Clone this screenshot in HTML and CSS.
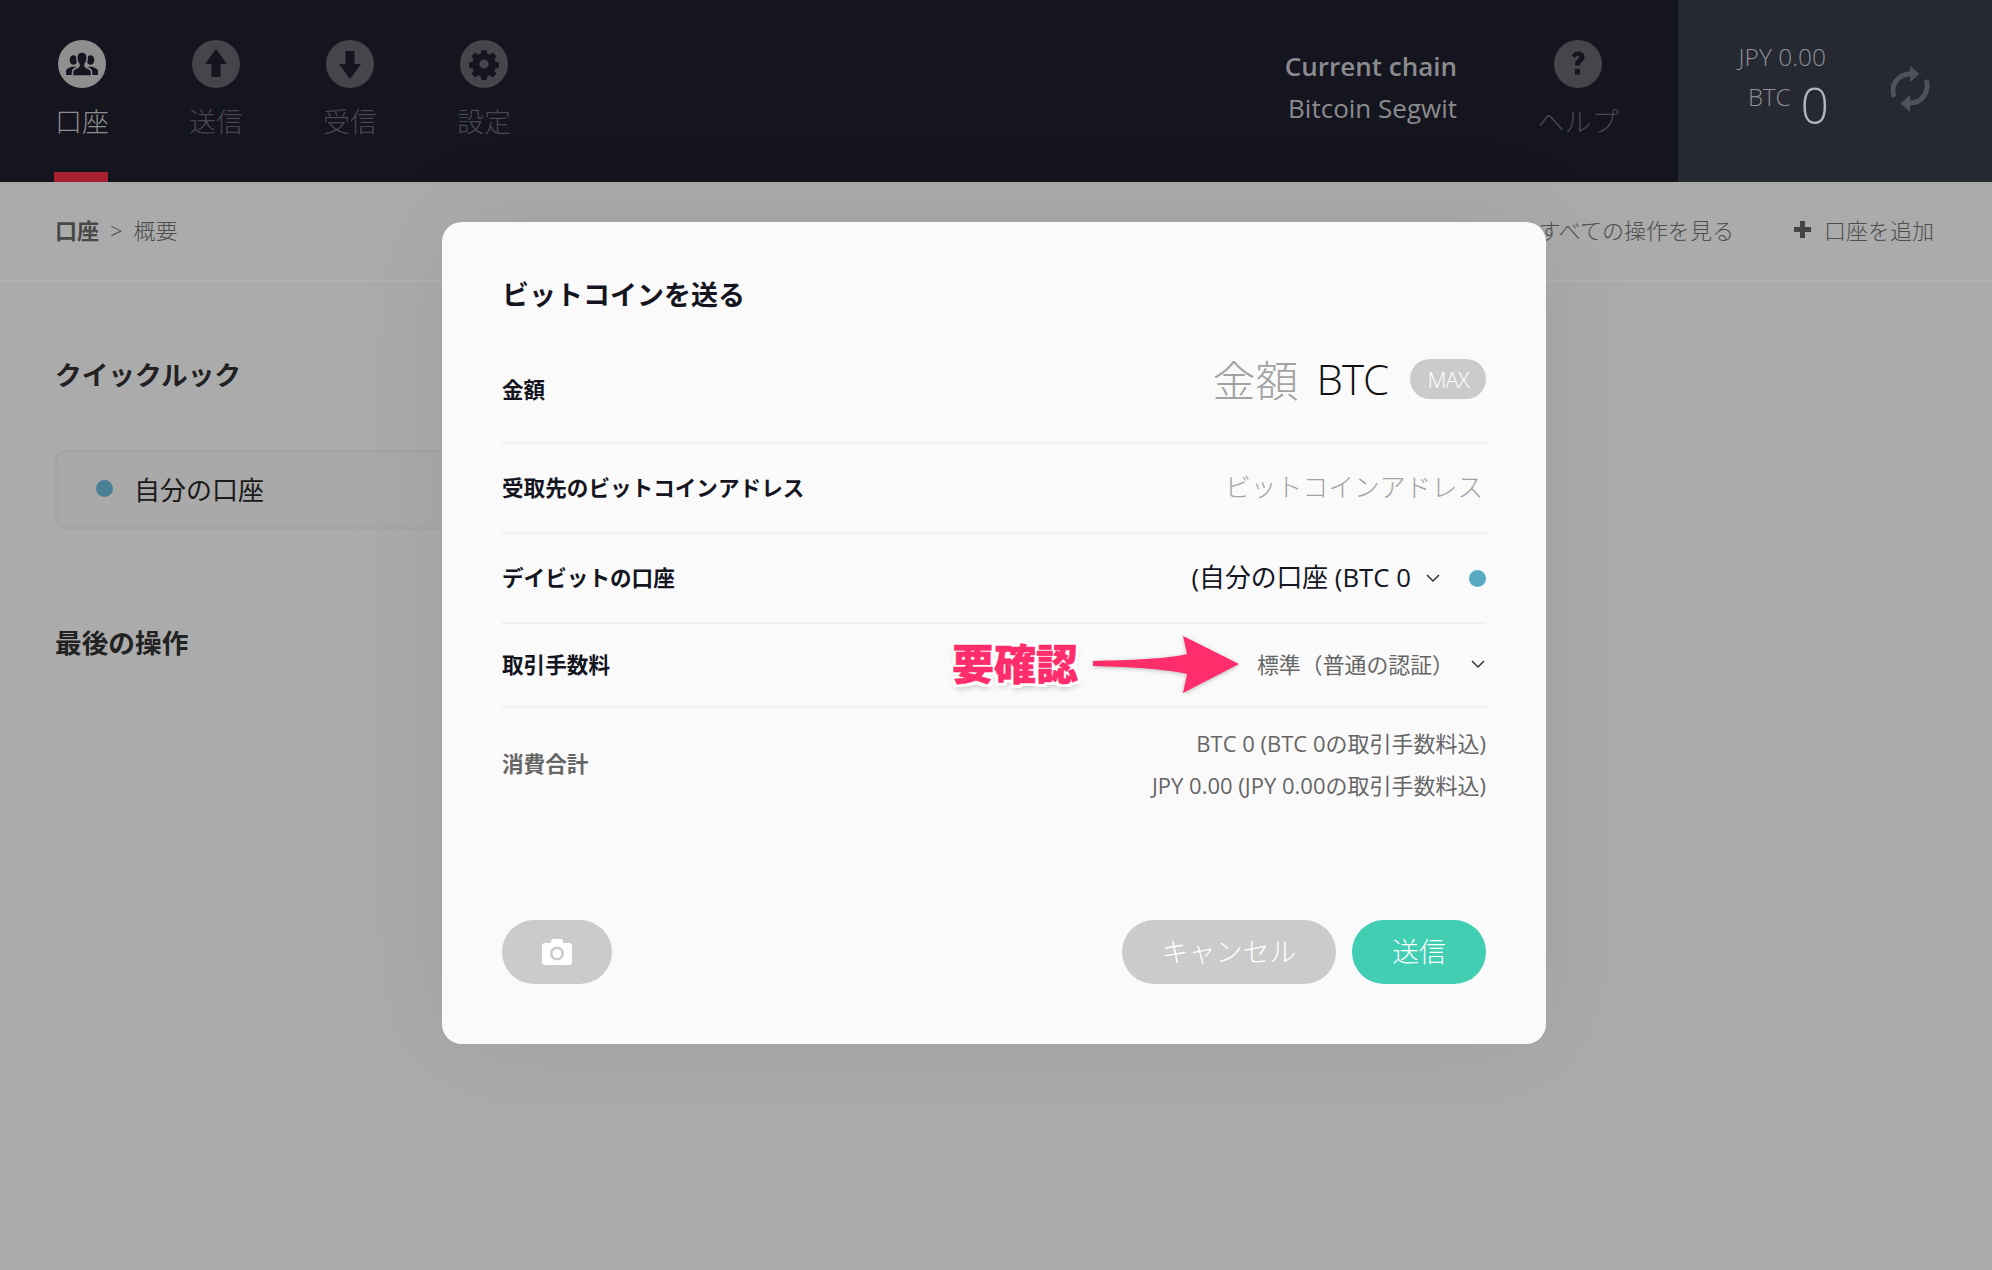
FILE: index.html
```html
<!DOCTYPE html>
<html lang="ja">

<head>
    <meta charset="utf-8">
    <meta name="viewport" content="width=device-width, initial-scale=1.0">
    <title>ビットコインを送る</title>

    <link rel="stylesheet" href="styles.css">
</head>

<body>

    <header class="top">
        <nav class="nav">
            <a class="nav-item aktiv">
                <span class="ikon">
                    <svg viewBox="0 0 48 48" width="48" height="48">
                        <ellipse cx="15.500" cy="20" rx="3.800" ry="4.800" />
                        <path d="M8 35v-3.500c0-2 1-2.800 3-3.600l2.500-1.200h4L20 28l-3 7z" />
                        <ellipse cx="32.500" cy="20" rx="3.800" ry="4.800" />
                        <path d="M40 35v-3.500c0-2-1-2.800-3-3.600l-2.500-1.200h-4L28 28l3 7z" />
                        <path class="midt" d="M24 12c3.200 0 5.200 2.500 5.200 6 0 2.700-1 5-2.200 6.200v1.800c0 1 1 1.400 3.200 2.300 2.300.9 3.300 1.900 3.300 3.700V36H14.500v-4c0-1.800 1-2.800 3.300-3.700 2.200-.9 3.200-1.300 3.200-2.300v-1.800c-1.200-1.200-2.200-3.500-2.200-6.200 0-3.500 2-6 5.200-6z" />
                    </svg>
                </span>
                <span class="nav-tekst">口座</span>
            </a>
            <a class="nav-item">
                <span class="ikon">
                    <svg viewBox="0 0 48 48" width="48" height="48"><path d="M24 9l11 15h-6.500v13h-9V24H13z" /></svg>
                </span>
                <span class="nav-tekst">送信</span>
            </a>
            <a class="nav-item">
                <span class="ikon">
                    <svg viewBox="0 0 48 48" width="48" height="48"><path d="M24 39L13 24h6.500V11h9v13H35z" /></svg>
                </span>
                <span class="nav-tekst">受信</span>
            </a>
            <a class="nav-item">
                <span class="ikon">
                    <svg viewBox="0 0 48 48" width="48" height="48">
                        <path fill-rule="evenodd" d="M21.500 10h5l.7 3.600 2.600 1.100 3-2.100 3.600 3.600-2.100 3 1.100 2.600 3.600.7v5l-3.600.7-1.100 2.600 2.100 3-3.600 3.600-3-2.100-2.600 1.100-.7 3.600h-5l-.7-3.600-2.600-1.100-3 2.100-3.600-3.600 2.100-3-1.100-2.600-3.600-.7v-5l3.600-.7 1.100-2.600-2.100-3 3.600-3.600 3 2.100 2.600-1.100zM24 19.500a4.500 4.500 0 1 0 0 9 4.500 4.500 0 0 0 0-9z" />
                    </svg>
                </span>
                <span class="nav-tekst">設定</span>
            </a>
        </nav>

        <div class="chain">
            <div class="chain-titel">Current chain</div>
            <div class="chain-navn">Bitcoin Segwit</div>
        </div>

        <a class="nav-item hjaelp">
            <span class="ikon">
                <svg viewBox="0 0 48 48" width="48" height="48">
                    <path d="M18 15.500c1.500-2.500 3.500-4 6.500-4 3.500 0 6 2.300 6 5.500 0 2.500-1.200 3.800-3 5.200-1.200 1-1.500 1.600-1.500 3.300h-5c0-3 .6-4.300 2.500-5.800 1.200-1 1.800-1.500 1.800-2.400 0-1-.7-1.600-1.800-1.600-1.200 0-2 .7-2.700 2zM21 29h5v5.500h-5z" />
                </svg>
            </span>
            <span class="nav-tekst">ヘルプ</span>
        </a>

        <div class="saldo">
            <div class="saldo-tal">
                <div class="saldo-jpy">JPY 0.00</div>
                <div class="saldo-btc"><span>BTC</span><b>0</b></div>
            </div>
            <svg class="opdater" viewBox="11 10 42 46" width="42" height="46">
                <path class="bue" d="M14 41A17 17 0 0 1 30 18" />
                <path d="M30 9.500l9.500 8.500-9.500 8z" />
                <path class="bue" d="M46 24A17 17 0 0 1 30 47" />
                <path d="M30 39l-9.500 8.500 9.500 8.500z" />
            </svg>
        </div>
    </header>

    <div class="subbar">
        <div class="sti"><b>口座</b><span class="pil">&gt;</span><span>概要</span></div>
        <div class="handling">
            <span>すべての操作を見る</span>
            <span class="tilfoej"><i class="plus"></i>口座を追加</span>
        </div>
    </div>

    <main class="indhold">
        <h2 class="sektion">クイックルック</h2>
        <div class="konto"><i class="prik"></i>自分の口座</div>
        <h2 class="sektion sidste">最後の操作</h2>
    </main>

    <section class="modal">
        <h3 class="modal-titel">ビットコインを送る</h3>

        <div class="raekke belob">
            <label>金額</label>
            <div class="belob-felt">
                <span class="pladsholder stor">金額</span>
                <span class="valuta">BTC</span>
                <span class="max">MAX</span>
            </div>
        </div>

        <div class="raekke adresse">
            <label>受取先のビットコインアドレス</label>
            <span class="pladsholder">ビットコインアドレス</span>
        </div>

        <div class="raekke adresse">
            <label>デイビットの口座</label>
            <div class="vaelg">
                <span>(自分の口座 (BTC 0</span>
                <svg class="pil-ned" viewBox="0 0 16 10" width="16" height="10"><path d="M2 2l6 6 6-6" /></svg>
                <i class="prik lille"></i>
            </div>
        </div>

        <div class="raekke gebyr">
            <label>取引手数料</label>
            <div class="vaelg graa">
                <span>標準（普通の認証）</span>
                <svg class="pil-ned" viewBox="0 0 16 10" width="16" height="10"><path d="M2 2l6 6 6-6" /></svg>
            </div>
        </div>

        <div class="raekke total">
            <label>消費合計</label>
            <div class="total-tal">
                <p>BTC 0 (BTC 0の取引手数料込)</p>
                <p>JPY 0.00 (JPY 0.00の取引手数料込)</p>
            </div>
        </div>

        <div class="knapper">
            <button class="knap kamera">
                <svg viewBox="0 0 30 26" width="30" height="26">
                    <path fill-rule="evenodd" d="M10 0h10l1.500 4H27a3 3 0 0 1 3 3v16a3 3 0 0 1-3 3H3a3 3 0 0 1-3-3V7a3 3 0 0 1 3-3h5.500zM15 7.500a7 7 0 1 0 0 14 7 7 0 0 0 0-14zm0 2.500a4.500 4.500 0 1 1 0 9 4.500 4.500 0 0 1 0-9z" />
                </svg>
            </button>
            <button class="knap fortryd">キャンセル</button>
            <button class="knap send">送信</button>
        </div>
    </section>

    <!-- rod markering oven paa skaermbilledet -->
    <div class="note">要確認</div>
    <svg class="note-pil" viewBox="0 0 150 60" width="150" height="60">
        <path d="M2 26C40 25 75 24 96 19L92 1l56 28-56 29 4-19C75 34 40 32 2 31z" />
    </svg>

</body>

</html>
```

FILE: styles.css
```css
* {
    box-sizing: border-box;
}

body {
    margin: 0;
    height: 1270px;
    overflow: hidden;
    position: relative;
    background-color: #ababab;
    font-family: "Open Sans", "Noto Sans CJK JP", sans-serif;
    color: #444;
}

h2,
h3,
p {
    margin: 0;
}

/* top */

.top {
    display: flex;
    height: 182px;
    background-color: #14151e;
}

.nav {
    display: flex;
    padding-left: 15px;
}

.nav-item {
    width: 134px;
    height: 182px;
    padding-top: 40px;
    display: flex;
    flex-direction: column;
    align-items: center;
    position: relative;
    color: #47484e;
}

.aktiv {
    color: #8d8d8f;
}

.aktiv::after {
    content: "";
    position: absolute;
    left: 39px;
    bottom: 0;
    width: 54px;
    height: 10px;
    background-color: #a82131;
}

.ikon {
    width: 48px;
    height: 48px;
    border-radius: 50%;
    background-color: #45454b;
    fill: #14151e;
    display: block;
}

.aktiv .ikon {
    background-color: #8f8f90;
}

.ikon svg {
    display: block;
}

.midt {
    stroke: #8f8f90;
    stroke-width: 1.500;
}

.nav-tekst {
    margin-top: 16px;
    font-size: 27px;
    line-height: 36px;
    font-weight: 300;
    white-space: nowrap;
}

.chain {
    margin-left: auto;
    padding-top: 45px;
    padding-right: 54px;
    text-align: right;
}

.chain-titel {
    font-size: 26px;
    line-height: 42px;
    font-weight: 600;
    color: #8b8b8e;
}

.chain-navn {
    font-size: 26px;
    line-height: 42px;
    color: #8b8b8e;
}

.hjaelp {
    margin-right: 33px;
}

.saldo {
    width: 314px;
    background-color: #262832;
    padding: 40px 0 0 58px;
    display: flex;
}

.saldo-tal {
    width: 90px;
    flex: none;
    text-align: right;
    color: #8f9095;
}

.saldo-jpy {
    font-size: 24.500px;
    line-height: 34px;
    font-weight: 300;
    white-space: nowrap;
}

.saldo-btc {
    display: flex;
    justify-content: flex-end;
    font-size: 24px;
    line-height: 34px;
    font-weight: 300;
    margin: 6px -3px 0 0;
}

.saldo-btc b {
    font-weight: 300;
    font-size: 50px;
    line-height: 50px;
    margin-left: 10px;
    color: #b4b5b8;
}

.opdater {
    margin: 26px 0 0 65px;
    fill: #50525b;
    flex: none;
}

.bue {
    fill: none;
    stroke: #50525b;
    stroke-width: 5;
}

/* sti og handlinger */

.subbar {
    height: 100px;
    padding: 0 58px 4px 55px;
    display: flex;
    align-items: center;
    justify-content: space-between;
    border-bottom: 2px solid #b1b1b1;
    font-size: 22px;
    color: #4e4e4e;
    font-weight: 300;
}

.sti b {
    font-weight: 700;
    color: #484848;
}

.pil {
    margin: 0 11px;
}

.handling {
    display: flex;
    gap: 60px;
}

.tilfoej {
    display: flex;
    align-items: center;
}

.plus {
    width: 17px;
    height: 17px;
    margin-right: 13px;
    background:
        linear-gradient(#444, #444) center / 100% 5px no-repeat,
        linear-gradient(#444, #444) center / 5px 100% no-repeat;
}

/* baggrund */

.indhold {
    padding: 0 55px;
}

.sektion {
    font-size: 26.700px;
    line-height: 40px;
    font-weight: 700;
    color: #222;
    padding-top: 73px;
}

.sidste {
    padding-top: 94px;
}

.konto {
    width: 500px;
    height: 79px;
    margin-top: 55px;
    padding: 0 0 2px 39px;
    display: flex;
    align-items: center;
    border: 2px solid #a4a4a4;
    border-radius: 10px;
    font-size: 26px;
    color: #1a1a1a;
    background-color: #a9a9a9;
}

.prik {
    width: 17px;
    height: 17px;
    margin-right: 21px;
    border-radius: 50%;
    background-color: #4a8096;
    display: block;
    flex: none;
}

.prik.lille {
    margin: 4px 0 0 28px;
    background-color: #5aaac6;
}

/* modal */

.modal {
    position: absolute;
    left: 442px;
    top: 222px;
    width: 1104px;
    height: 822px;
    padding: 0 60px 60px;
    display: flex;
    flex-direction: column;
    background-color: #fafafa;
    border-radius: 20px;
    box-shadow: 0 0 110px rgba(0, 0, 0, 0.07);
}

.modal-titel {
    font-size: 27px;
    line-height: 40px;
    font-weight: 700;
    color: #14151e;
    padding-top: 53px;
    height: 93px;
    flex: none;
}

.raekke {
    display: flex;
    align-items: center;
    justify-content: space-between;
    padding-bottom: 4px;
    border-bottom: 2px solid #f0f0f0;
}

.raekke label {
    font-size: 21.600px;
    font-weight: 700;
    color: #14151e;
}

.belob {
    height: 129px;
    padding-bottom: 0;
}

.belob label {
    margin-top: 19px;
}

.belob-felt {
    display: flex;
    align-items: center;
}

.pladsholder {
    font-size: 25.800px;
    color: #a3a3a3;
    font-weight: 300;
    white-space: nowrap;
    margin-right: 3px;
}

.stor {
    font-size: 43px;
    margin-right: 18px;
}

.valuta {
    font-size: 42px;
    font-weight: 300;
    color: #111;
    letter-spacing: -1px;
}

.max {
    width: 76px;
    height: 40px;
    margin-left: 22px;
    border-radius: 20px;
    background-color: #cbcbcb;
    color: #fff;
    font-size: 22px;
    font-weight: 300;
    line-height: 40px;
    text-align: center;
    letter-spacing: -1px;
}

.adresse {
    height: 90px;
}

.gebyr {
    height: 84px;
}

.vaelg {
    display: flex;
    align-items: center;
    font-size: 25.800px;
    color: #14151e;
}

.pil-ned {
    margin: 4px 0 0 14px;
    fill: none;
    stroke: #333;
    stroke-width: 1.500;
}

.graa {
    font-size: 21.900px;
    color: #666;
}

.graa .pil-ned {
    margin: 2px 0 0 16px;
}

.total {
    border-bottom: 0;
    padding: 14px 0 0;
}

.total label {
    color: #666;
    margin-bottom: 4px;
}

.total-tal {
    text-align: right;
    font-size: 22px;
    line-height: 42px;
    color: #666;
}

.knapper {
    margin-top: auto;
    display: flex;
    align-items: center;
    gap: 16px;
}

.knap {
    height: 64px;
    border: 0;
    border-radius: 32px;
    background-color: #cbcbcb;
    color: #fff;
    font-family: inherit;
    font-size: 27px;
    font-weight: 300;
    padding: 0 0 3px;
}

.kamera {
    width: 110px;
    margin-right: auto;
    fill: #fff;
}

.kamera svg {
    display: block;
    margin: 3px auto 0;
}

.fortryd {
    width: 214px;
}

.send {
    width: 134px;
    background-color: #41ceb3;
}

/* markering */

.note {
    position: absolute;
    left: 952px;
    top: 636px;
    font-size: 42px;
    line-height: 56px;
    font-weight: 900;
    color: #ff2d6b;
    -webkit-text-stroke: 0.500px #ff2d6b;
    text-shadow: 3px 0 0 #fff, -3px 0 0 #fff, 0 3px 0 #fff, 0 -3px 0 #fff, 3px 3px 0 #fff, -3px 3px 0 #fff, 3px -3px 0 #fff, -3px -3px 0 #fff, 0 4px 6px rgba(0, 0, 0, 0.3);
}

.note-pil {
    position: absolute;
    left: 1091px;
    top: 635px;
    fill: #ff2d6b;
    filter: drop-shadow(0 1px 2px rgba(0, 0, 0, 0.25));
}
```
